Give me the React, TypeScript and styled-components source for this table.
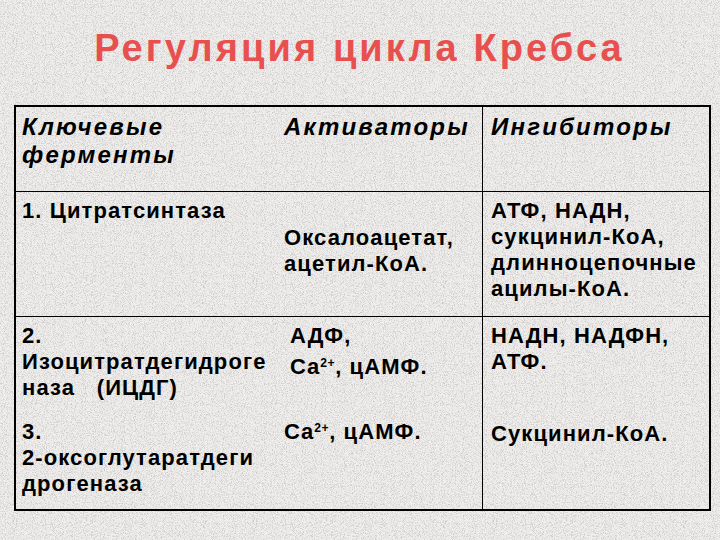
import styled, { createGlobalStyle } from "styled-components";

const noise =
  "data:image/svg+xml;utf8," +
  encodeURIComponent(
    `<svg xmlns='http://www.w3.org/2000/svg' width='240' height='240'><filter id='n'><feTurbulence type='fractalNoise' baseFrequency='1.1' numOctaves='2' seed='4' stitchTiles='stitch'/><feColorMatrix values='0 0 0 0 0.6  0 0 0 0 0.59  0 0 0 0 0.58  3.2 0 0 0 -1.45'/></filter><rect width='100%' height='100%' filter='url(#n)'/></svg>`
  );

const GlobalStyle = createGlobalStyle`
  html, body {
    margin: 0;
    padding: 0;
  }
  body {
    font-family: "Liberation Sans", Arial, sans-serif;
    background: #e9e8e6;
  }
`;

const Slide = styled.div`
  width: 720px;
  height: 540px;
  box-sizing: border-box;
  padding: 23px 9px 0 14px;
  background-color: #efeeec;
  background-image: url("${noise}");
  display: flex;
  flex-direction: column;
`;

const Title = styled.h1`
  margin: 0 0 19px;
  height: 63px;
  padding-right: 6px;
  text-align: center;
  font-size: 38px;
  font-weight: bold;
  letter-spacing: 3.1px;
  line-height: 50px;
  color: #e8504f;
`;

const Table = styled.div`
  display: grid;
  grid-template-columns: 262px 205px 1fr;
  grid-template-rows: 85px 125px 192px;
  width: 697px;
  box-sizing: border-box;
  border: 2px solid #000;
  color: #000;
`;

const Cell = styled.div<{ $right?: boolean; $bottom?: boolean; $pad?: number; $indent?: number }>`
  box-sizing: border-box;
  padding: ${(p) => p.$pad ?? 6}px 0 0 ${(p) => p.$indent ?? 6}px;
  border-right: ${(p) => (p.$right ? "1px solid #000" : "none")};
  border-bottom: ${(p) => (p.$bottom ? "1px solid #000" : "none")};
  font-size: 22px;
  font-weight: bold;
  letter-spacing: 1.1px;
  line-height: 26px;
  white-space: nowrap;
`;

const Head = styled.div`
  font-style: italic;
  font-size: 24px;
  letter-spacing: 2.2px;
  line-height: 28px;
`;

const Item = styled.div<{ $gap?: number }>`
  margin-top: ${(p) => p.$gap ?? 0}px;
`;

const Line = styled.div<{ $shift?: number; $gap?: number }>`
  margin-left: ${(p) => p.$shift ?? 0}px;
  margin-top: ${(p) => p.$gap ?? 0}px;
`;

const Sup = styled.sup`
  font-size: 0.55em;
  letter-spacing: 0.5px;
  vertical-align: 0.6em;
  line-height: 0;
`;

export default function App() {
  return (
    <>
      <GlobalStyle />
      <Slide>
        <Title>Регуляция цикла Кребса</Title>
        <Table>
          <Cell $bottom>
            <Head>
              Ключевые
              <br />
              ферменты
            </Head>
          </Cell>
          <Cell $bottom $right>
            <Head>Активаторы</Head>
          </Cell>
          <Cell $bottom $indent={8}>
            <Head>Ингибиторы</Head>
          </Cell>

          <Cell $bottom>1. Цитратсинтаза</Cell>
          <Cell $bottom $right $pad={33}>
            Оксалоацетат,
            <br />
            ацетил-КоА.
          </Cell>
          <Cell $bottom $indent={8}>
            АТФ, НАДН,
            <br />
            сукцинил-КоА,
            <br />
            длинноцепочные
            <br />
            ацилы-КоА.
          </Cell>

          <Cell>
            <Item>
              2.
              <br />
              Изоцитратдегидроге
              <br />
              наза &nbsp; (ИЦДГ)
            </Item>
            <Item $gap={18}>
              3.
              <br />
              2-оксоглутаратдеги
              <br />
              дрогеназа
            </Item>
          </Cell>
          <Cell $right>
            <Line $shift={6}>АДФ,</Line>
            <Line $shift={6} $gap={5}>
              Ca<Sup>2+</Sup>, цАМФ.
            </Line>
            <Line $gap={39}>
              Ca<Sup>2+</Sup>, цАМФ.
            </Line>
          </Cell>
          <Cell $indent={8}>
            <Item>
              НАДН, НАДФН,
              <br />
              АТФ.
            </Item>
            <Item $gap={46}>Сукцинил-КоА.</Item>
          </Cell>
        </Table>
      </Slide>
    </>
  );
}
